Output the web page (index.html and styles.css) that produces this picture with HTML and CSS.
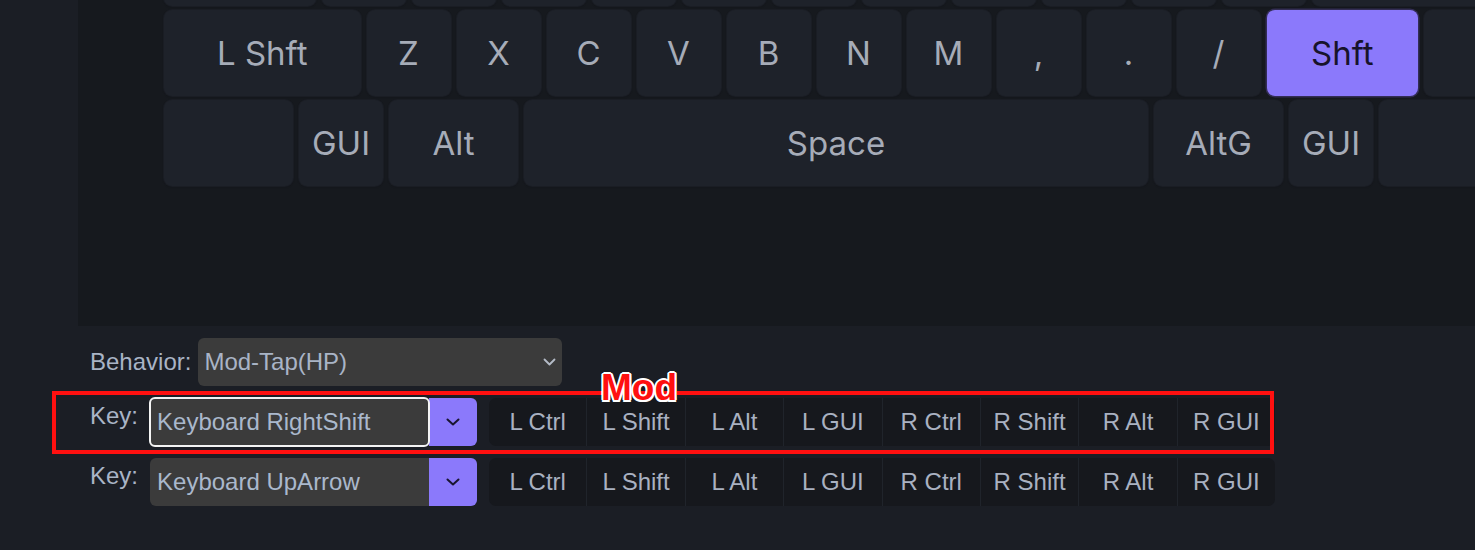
FILE: index.html
```html
<!DOCTYPE html>
<html lang="en">
<head>
<meta charset="utf-8">
<title>Keymap editor</title>
<link rel="stylesheet" href="styles.css">
</head>
<body>
<div class="app">
  <div class="editor">
    <div class="kb-panel">
      <div class="kb">
        <div class="kb-row">
          <div class="key u175"></div>
          <div class="key u1"></div>
          <div class="key u1"></div>
          <div class="key u1"></div>
          <div class="key u1"></div>
          <div class="key u1"></div>
          <div class="key u1"></div>
          <div class="key u1"></div>
          <div class="key u1"></div>
          <div class="key u1"></div>
          <div class="key u1"></div>
          <div class="key u1"></div>
          <div class="key u225"></div>
        </div>
        <div class="kb-row">
          <div class="key u225">L Shft</div>
          <div class="key u1">Z</div>
          <div class="key u1">X</div>
          <div class="key u1">C</div>
          <div class="key u1">V</div>
          <div class="key u1">B</div>
          <div class="key u1">N</div>
          <div class="key u1">M</div>
          <div class="key u1">,</div>
          <div class="key u1">.</div>
          <div class="key u1">/</div>
          <div class="key u175 selected">Shft</div>
          <div class="key u1"></div>
        </div>
        <div class="kb-row">
          <div class="key u15"></div>
          <div class="key u1">GUI</div>
          <div class="key u15">Alt</div>
          <div class="key u7">Space</div>
          <div class="key u15">AltG</div>
          <div class="key u1">GUI</div>
          <div class="key u15"></div>
        </div>
      </div>
    </div>

    <div class="controls">
      <div class="field field-behavior">
        <span class="label label-behavior">Behavior:</span>
        <div class="select">
          <span class="select-text">Mod-Tap(HP)</span>
          <svg class="chev-light" width="13" height="8" viewBox="0 0 13 8"><polyline points="1.5,1.5 6.5,6.5 11.5,1.5" fill="none" stroke="currentColor" stroke-width="1.8" stroke-linecap="round" stroke-linejoin="round"/></svg>
        </div>
      </div>

      <div class="field">
        <span class="label label-key">Key:</span>
        <div class="combo">
          <div class="combo-input focused">Keyboard RightShift</div>
          <div class="combo-btn">
            <svg width="14" height="8" viewBox="0 0 14 8"><polyline points="1.5,1.5 7,6.5 12.5,1.5" fill="none" stroke="currentColor" stroke-width="2" stroke-linecap="round" stroke-linejoin="round"/></svg>
          </div>
        </div>
        <div class="mods">
          <div class="mod">L Ctrl</div>
          <div class="mod">L Shift</div>
          <div class="mod">L Alt</div>
          <div class="mod">L GUI</div>
          <div class="mod">R Ctrl</div>
          <div class="mod">R Shift</div>
          <div class="mod">R Alt</div>
          <div class="mod">R GUI</div>
        </div>
      </div>

      <div class="field">
        <span class="label label-key">Key:</span>
        <div class="combo">
          <div class="combo-input">Keyboard UpArrow</div>
          <div class="combo-btn">
            <svg width="14" height="8" viewBox="0 0 14 8"><polyline points="1.5,1.5 7,6.5 12.5,1.5" fill="none" stroke="currentColor" stroke-width="2" stroke-linecap="round" stroke-linejoin="round"/></svg>
          </div>
        </div>
        <div class="mods">
          <div class="mod">L Ctrl</div>
          <div class="mod">L Shift</div>
          <div class="mod">L Alt</div>
          <div class="mod">L GUI</div>
          <div class="mod">R Ctrl</div>
          <div class="mod">R Shift</div>
          <div class="mod">R Alt</div>
          <div class="mod">R GUI</div>
        </div>
      </div>
    </div>
  </div>

  <div class="annot-box"></div>
  <div class="annot-label">Mod</div>
</div>
</body>
</html>
```

FILE: styles.css
```css
* { box-sizing: border-box; }

html, body {
  margin: 0;
  padding: 0;
  background: #1b1e25;
  width: 1475px;
  height: 550px;
  overflow: hidden;
}

.app {
  position: relative;
  width: 1475px;
  height: 550px;
  padding-left: 78px;
}

.editor {
  display: flex;
  flex-direction: column;
}

/* keyboard panel */
.kb-panel {
  height: 326px;
  background: #16191e;
  overflow: hidden;
}

.kb {
  margin-top: -80px;
  padding-left: 86px;
  display: flex;
  flex-direction: column;
  gap: 4px;
}

.kb-row {
  display: flex;
  gap: 6px;
}

.key {
  flex-shrink: 0;
  height: 86px;
  border-radius: 8px;
  background: #1e222a;
  box-shadow: 0 0 0 1px #1a1d24, 0 1px 2px rgba(0, 0, 0, 0.25);
  display: flex;
  align-items: center;
  justify-content: center;
  font-family: Inter, "Noto Sans", sans-serif;
  font-size: 33px;
  color: #a6acb8;
}

.u1 { width: 84px; }
.u15 { width: 129px; }
.u175 { width: 151.5px; }
.u225 { width: 196.5px; }
.u7 { width: 624px; }

.key.selected {
  background: #8b79fb;
  color: #17132b;
  box-shadow: 0 0 0 1.5px #332d55;
}

/* controls */
.controls {
  padding: 12px 0 0 12px;
  display: flex;
  flex-direction: column;
  gap: 12px;
  font-family: "Liberation Sans", Arial, sans-serif;
  font-size: 24px;
  color: #a9b4c6;
}

.field {
  display: flex;
  align-items: flex-start;
  height: 48px;
}

.field-behavior {
  align-items: center;
}

.label {
  line-height: 28px;
}

.label-behavior {
  margin-right: 7px;
}

.label-key {
  padding-top: 4px;
  margin-right: 12px;
}

.select {
  width: 364px;
  height: 48px;
  background: #3b3b3b;
  border-radius: 6px;
  display: flex;
  align-items: center;
  justify-content: space-between;
  padding: 0 6px 0 6px;
}

.chev-light {
  color: #b4bbc7;
}

.combo {
  display: flex;
  height: 48px;
}

.combo-input {
  width: 279px;
  height: 48px;
  background: #3b3b3b;
  border-radius: 6px 0 0 6px;
  display: flex;
  align-items: center;
  padding-left: 7px;
  color: #aab8cc;
}

.combo-input.focused {
  border-radius: 5px;
  outline: 2px solid #f4f4f4;
  outline-offset: -1px;
  position: relative;
  z-index: 1;
}

.combo-btn {
  width: 48px;
  height: 48px;
  background: #8b79fb;
  border-radius: 0 6px 6px 0;
  display: flex;
  align-items: center;
  justify-content: center;
  color: #1a1530;
}

.mods {
  margin-left: 12px;
  width: 786px;
  height: 48px;
  display: flex;
  background: #16181d;
  border-radius: 7px;
  overflow: hidden;
}

.mod {
  flex: 1;
  display: flex;
  align-items: center;
  justify-content: center;
  color: #a9b1c1;
  border-left: 1px solid #20242b;
}

.mod:first-child {
  border-left: none;
}

/* annotation overlay */
.annot-box {
  position: absolute;
  left: 52px;
  top: 391px;
  width: 1222px;
  height: 63px;
  border: 4px solid #ff1010;
  pointer-events: none;
}

.annot-label {
  position: absolute;
  left: 601px;
  top: 369px;
  font-family: "Liberation Sans", Arial, sans-serif;
  font-weight: bold;
  font-size: 37px;
  line-height: 37px;
  color: #ff1010;
  text-shadow:
    2px 0 0 #fff, -2px 0 0 #fff, 0 2px 0 #fff, 0 -2px 0 #fff,
    1.5px 1.5px 0 #fff, -1.5px 1.5px 0 #fff, 1.5px -1.5px 0 #fff, -1.5px -1.5px 0 #fff;
}
```
